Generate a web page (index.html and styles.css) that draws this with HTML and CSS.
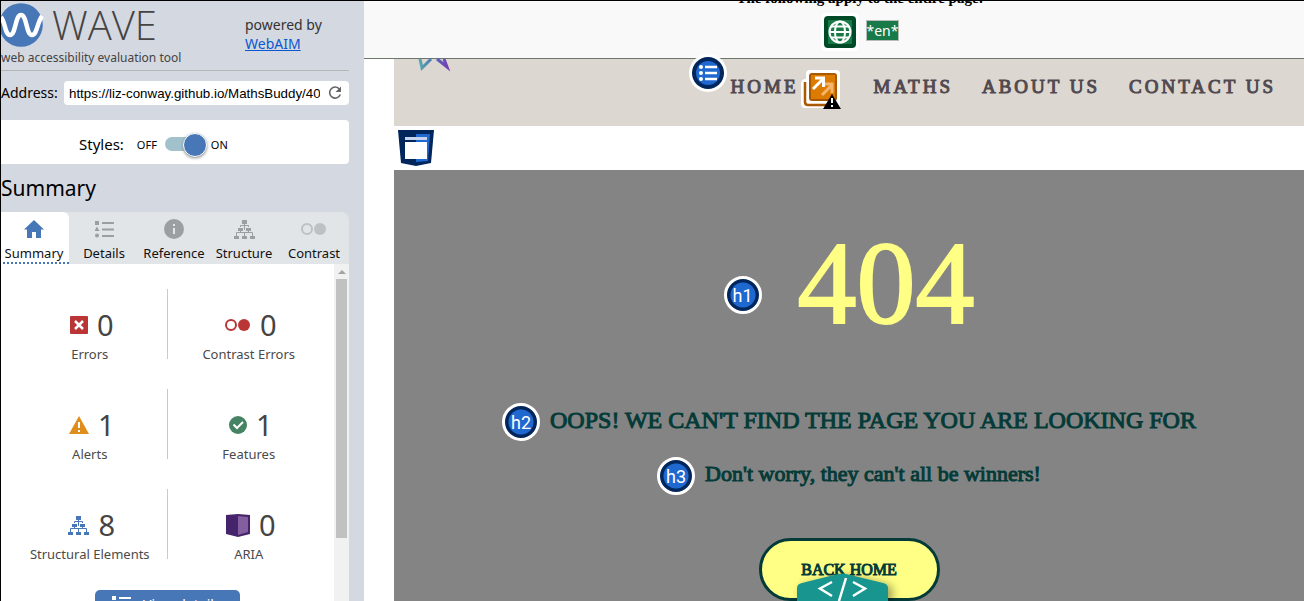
FILE: index.html
```html
<!DOCTYPE html>
<html lang="en">
<head>
<meta charset="utf-8">
<title>WAVE report</title>
<link rel="stylesheet" href="styles.css">
</head>
<body>
<svg class="defs" aria-hidden="true">
  <symbol id="tree" viewBox="0 0 21 19">
    <path fill="none" stroke="currentColor" d="M10.5 2v8M6.5 7V5.500h8V7M6.500 8v4M14.500 8v4M2.500 16v-3.500h16V16M10.500 12.500V17"/>
    <path fill="currentColor" d="M8 0h5v4H8zM4 8h5v3H4zM12 8h5v3h-5zM0 16h5v3H0zM8 16h5v3H8zM16 16h5v3h-5z"/>
  </symbol>
  <symbol id="rings" viewBox="0 0 26 12">
    <circle cx="6" cy="6" r="5" fill="none" stroke="currentColor" stroke-width="2"/>
    <circle cx="19" cy="6" r="6" fill="currentColor"/>
  </symbol>
  <symbol id="list" viewBox="0 0 19 17">
    <path fill="currentColor" d="M0 0h4v4H0zM2 5.500l2.500 4.500h-5zM7 1h12v2H7zM7 7.500h12v2H7zM7 14h12v2H7z"/>
    <circle cx="2" cy="14.500" r="2" fill="currentColor"/>
  </symbol>
</svg>
<aside class="sidebar">
  <header class="brand">
    <div class="logo">
      <div class="logo-line">
        <svg width="43" height="44" viewBox="0 0 43 44" aria-hidden="true"><circle cx="20" cy="22" r="21.800" fill="#4777b6"/><path d="M0 14c4 4 4 18 9 18 6 0 5-20 11-20s5 20 11 20c5 0 5-12 10-19" fill="none" stroke="#fff" stroke-width="4.500"/></svg>
        <span class="logo-name">WAVE</span>
      </div>
      <div class="tagline">web accessibility evaluation tool</div>
    </div>
    <div class="powered">powered by<br><a href="#">WebAIM</a></div>
  </header>
  <form class="address">
    <label for="url">Address:</label>
    <div class="field">
      <input id="url" type="text" value="https://liz-conway.github.io/MathsBuddy/404.html">
      <button type="button" aria-label="Reload"><svg width="14" height="14" viewBox="0 0 14 14"><path d="M11.500 3.200A5.500 5.500 0 1 0 12.300 8.500" fill="none" stroke="#666" stroke-width="1.600"/><path d="M13 .5V6H7.500z" fill="#666"/></svg></button>
    </div>
  </form>
  <label class="styles-toggle">
    <span class="styles-label">Styles:</span><span>OFF</span>
    <input type="checkbox" role="switch" checked>
    <span>ON</span>
  </label>
  <h2 class="section-title">Summary</h2>
  <nav class="tabs">
    <button class="tab active" type="button"><svg width="20" height="18" viewBox="0 0 20 18"><path fill="#4777b6" d="M10 0l10 9.500h-3V18h-5v-6H8v6H3V9.500H0z"/></svg><span>Summary</span></button>
    <button class="tab" type="button"><svg width="19" height="17"><use href="#list"/></svg><span>Details</span></button>
    <button class="tab" type="button"><svg width="20" height="20" viewBox="0 0 20 20"><circle cx="10" cy="10" r="10" fill="#9b9fa2"/><path fill="#e1e5e8" d="M9 5h2v2H9zM9 9h2v6H9z"/></svg><span>Reference</span></button>
    <button class="tab" type="button"><svg width="21" height="19"><use href="#tree"/></svg><span>Structure</span></button>
    <button class="tab faded" type="button"><svg width="26" height="12"><use href="#rings"/></svg><span>Contrast</span></button>
  </nav>
  <section class="panel">
    <div class="panel-body">
      <ul class="stats">
        <li><div class="count"><svg width="18" height="18" viewBox="0 0 18 18"><rect width="18" height="18" rx="1" fill="#b93536"/><path d="M5 5l8 8M13 5l-8 8" stroke="#fff" stroke-width="2.500"/></svg>0</div>Errors</li>
        <li><div class="count red"><svg width="26" height="12"><use href="#rings"/></svg>0</div>Contrast Errors</li>
        <li><div class="count"><svg width="20" height="18" viewBox="0 0 20 18"><path d="M10 0l10 18H0z" fill="#e08e1b"/><path d="M9 6h2v6H9zM9 14h2v2H9z" fill="#fff"/></svg>1</div>Alerts</li>
        <li><div class="count"><svg width="18" height="18" viewBox="0 0 18 18"><circle cx="9" cy="9" r="9" fill="#468364"/><path d="M4.500 8.500l3.500 3.500 6-6" fill="none" stroke="#fff" stroke-width="2"/></svg>1</div>Features</li>
        <li><div class="count blue"><svg width="21" height="19"><use href="#tree"/></svg>8</div>Structural Elements</li>
        <li><div class="count"><svg width="24" height="23" viewBox="0 0 24 23"><path d="M0 1l12-1 12 1v19l-12 3-12-3z" fill="#46246c"/><path d="M12 2l10 1v15l-10 3z" fill="#835f9f"/></svg>0</div>ARIA</li>
      </ul>
      <button class="details" type="button"><svg width="19" height="17"><use href="#list"/></svg>View details</button>
    </div>
    <div class="scroll" aria-hidden="true"><i class="arrow"></i><i class="thumb"></i></div>
  </section>
</aside>
<div class="content">
  <div class="pagebar">
    <p>The following apply to the entire page:</p>
    <div class="pageicons">
      <svg class="globe" width="38" height="38" viewBox="0 0 38 38"><rect width="38" height="38" rx="5" fill="#fff"/><rect x="3" y="3" width="32" height="32" rx="4" fill="#004b27"/><path fill="#187a48" d="M7 7h24v24H7z"/><g fill="none" stroke="#fff" stroke-width="2"><circle cx="19" cy="19" r="10.500"/><ellipse cx="19" cy="19" rx="5" ry="10.500"/><path d="M8.500 19h21M10 13.500h18M10 24.500h18"/></g></svg>
      <span class="lang">*en*</span>
    </div>
  </div>
  <div class="site">
    <header class="site-header">
      <svg class="star" width="34" height="12" viewBox="0 0 34 12"><defs><linearGradient id="sg" gradientUnits="userSpaceOnUse" x1="2" x2="32"><stop stop-color="#56aaa9"/><stop offset=".5" stop-color="#4c70bd"/><stop offset="1" stop-color="#7a3ab5"/></linearGradient></defs><path d="M3 0l2 9 9-9M20 0l10 8-3-8" fill="none" stroke="url(#sg)" stroke-width="3"/></svg>
      <nav class="links">
        <svg class="navmark" width="38" height="38" viewBox="0 0 38 38"><circle cx="19" cy="19" r="19" fill="#fff"/><circle cx="19" cy="19" r="16" fill="#00265c"/><circle cx="19" cy="19" r="12" fill="#1f68d0"/><path d="M16 13h12M16 19h12M16 25h12" stroke="#fff" stroke-width="2.500"/><g fill="#fff"><circle cx="12" cy="13" r="2"/><circle cx="12" cy="19" r="2"/><circle cx="12" cy="25" r="2"/></g></svg>
        <a href="#">HOME</a>
        <svg class="linkmark" width="40" height="40" viewBox="0 0 40 40"><path d="M5 9V4q0-4 4-4h26q4 0 4 4v34H4q-4 0-4-4V14q0-5 5-5z" fill="#fff"/><path d="M4 12v20q0 3 3 3h22" fill="none" stroke="#a95900" stroke-width="2.500"/><rect x="8" y="3" width="28" height="28" rx="3" fill="#a95900"/><path d="M10 5h24v24H10z" fill="#dd7a00"/><g fill="none" stroke-width="3"><path d="M21 25L30 16M22 14h9v9" stroke="#f2b66e"/><path d="M12 19L21 10M14 8h8.500v9" stroke="#fff"/></g><path d="M31 24l9 15H22z" fill="#000"/><path d="M30 28h2v5h-2zM30 35h2v2h-2z" fill="#fff"/></svg>
        <a href="#">MATHS</a><a href="#">ABOUT US</a><a href="#">CONTACT US</a>
      </nav>
    </header>
    <div class="strip"><svg width="36" height="36" viewBox="0 0 36 36"><path d="M0 0h36l-3 33-15 3-15-3z" fill="#00265c"/><path d="M18 4h14l-2 27-12 1z" fill="#1f68d0"/><path d="M7 12h22v17H7z" fill="#fff"/><path d="M7 7h22v3H7z" fill="#c5d3ee"/></svg></div>
    <main class="main">
      <div class="row hero"><span class="badge">h1</span><h1>404</h1></div>
      <div class="row oops"><span class="badge">h2</span><h2>OOPS! WE CAN'T FIND THE PAGE YOU ARE LOOKING FOR</h2></div>
      <div class="row worry"><span class="badge">h3</span><h3>Don't worry, they can't all be winners!</h3></div>
      <button class="home" type="button">BACK HOME</button>
    </main>
  </div>
  <button class="code" type="button" aria-label="Code panel"><svg width="91" height="28" viewBox="0 0 91 28"><path d="M0 28V15q0-4 5-5L41 1q4-1 8 0l37 9q5 1 5 5v13z" fill="#18958e"/><path d="M35 9l-12 6.500L35 23M56 9l12 6.500L56 23M49 5L42 28" fill="none" stroke="#fff" stroke-width="2.500"/></svg></button>
</div>
</body>
</html>
```

FILE: styles.css
```css
* { box-sizing: border-box; }
body {
  margin: 0;
  height: 100vh;
  overflow: hidden;
  display: grid;
  grid-template-columns: 363px 1fr;
  border-left: 1px solid #000;
  border-top: 1px solid #000;
  font-family: "Noto Sans", "Open Sans", sans-serif;
  color: #000;
}
h1, h2, h3, p, ul { margin: 0; padding: 0; }
button { border: 0; padding: 0; font: inherit; background: none; }
svg { display: block; flex: none; overflow: visible; }
.defs { position: absolute; width: 0; height: 0; }

.sidebar {
  background: #d4d8e0;
  padding-right: 15px;
  display: flex;
  flex-direction: column;
  min-height: 0;
  overflow: hidden;
}
.brand {
  display: flex;
  justify-content: space-between;
  height: 70px;
  border-bottom: 1px solid #b3b5b9;
}
.logo { color: #444; }
.logo-line { display: flex; align-items: center; gap: 8px; height: 47px; }
.logo-name { font-family: "Open Sans", "Noto Sans", sans-serif; font-weight: 300; font-size: 40px; line-height: 44px; }
.tagline { font-size: 12px; line-height: 19px; }
.powered { width: 104px; padding-top: 14px; font-size: 14px; line-height: 19px; color: #333; }
.powered a { color: #0b57d0; }

.address { display: flex; align-items: center; gap: 3px; margin-top: 10px; font-size: 14px; }
.address label { flex: none; width: 60px; line-height: 24px; }
.field { flex: 1; min-width: 0; display: flex; align-items: center; height: 24px; padding: 0 7px 0 5px; gap: 8px; background: #fff; border-radius: 4px; }
.field input { flex: 1; min-width: 0; border: 0; padding: 0; background: none; font-family: "Liberation Sans", Arial, sans-serif; color: #000; }

.styles-toggle { display: flex; align-items: center; gap: 8px; height: 44px; margin-top: 15px; padding: 4px 0 0 78px; background: #fff; border-radius: 0 4px 4px 0; font-size: 11px; }
.styles-label { font-size: 15px; margin-right: 5px; }
.styles-toggle input { appearance: none; position: relative; width: 38px; height: 14px; margin: 0; border-radius: 7px; background: #a1c2cc; }
.styles-toggle input::after { content: ""; position: absolute; right: -4px; top: -4px; width: 22px; height: 22px; border: 1px solid #fff; border-radius: 50%; background: #4777b6; box-shadow: 0 1px 3px #888; }

.section-title { margin-top: 9px; font-size: 21px; font-weight: 400; line-height: 30px; }

.tabs { display: grid; grid-template-columns: repeat(5, 1fr); margin: 9px 0 0 -2px; background: #e1e5e8; border-radius: 0 8px 0 0; }
.tab { display: grid; grid-template-rows: 34px 14px; place-items: center; font-size: 13px; height: 52px; line-height: 14px; color: #9b9fa2; border-bottom: 2px solid transparent; }
.tab span { color: #111; }
.tab.active { background: #fff; border-bottom: 2px dotted #4777b6; border-radius: 0 6px 0 0; }
.tab.faded { color: #bec1c3; }

.panel { display: flex; flex: 1; min-height: 0; background: #fff; overflow: hidden; }
.panel-body { flex: 1; padding: 25px 8px 0 8px; }
.stats { list-style: none; display: grid; grid-template-columns: 1fr 1fr; row-gap: 30px; }
.stats li { height: 70px; padding: 16px 0 0 4px; text-align: center; font-size: 13px; line-height: 18px; white-space: nowrap; color: #4a4a4a; }
.stats li:nth-child(odd) { border-right: 1px solid #c9c9c9; }
.count { display: flex; align-items: center; justify-content: center; gap: 9px; height: 40px; padding-left: 4px; font-size: 29px; line-height: 40px; color: #444; }
.count.red svg { color: #b93536; }
.count.blue svg { color: #4777b6; }
.details { display: flex; align-items: center; gap: 12px; width: 145px; margin: 31px auto 0; height: 28px; padding: 0 17px; border-radius: 5px; background: #4777b6; color: #fff; font-size: 14px; white-space: nowrap; }
.scroll { width: 15px; flex: none; background: #f1f1f1; display: flex; flex-direction: column; align-items: center; }
.arrow { margin: 6px 0 5px; border: 4px solid transparent; border-top: 0; border-bottom-color: #a3a3a3; }
.thumb { width: 11px; height: 77%; background: #c1c1c1; }

.content { position: relative; overflow: hidden; min-width: 0; font-family: "Liberation Serif", "Times New Roman", serif; }
.pagebar { height: 58px; overflow: hidden; background: #f9f9f9; border-bottom: 1px solid #6b786b; display: flex; flex-direction: column; justify-content: flex-end; align-items: center; padding: 0 0 7px 52px; }
.pagebar p { font-size: 15px; line-height: 18px; margin-bottom: 6px; font-weight: 700; white-space: nowrap; }
.pageicons { display: flex; align-items: center; gap: 7px; }
.lang { height: 21px; margin-bottom: 3px; border: 1px solid #b8bcb8; background: #187a48; color: #fff; font: 14px/19px "Noto Sans", sans-serif; }
.site { margin-left: 30px; }
.site-header { display: flex; justify-content: space-between; height: 67px; padding: 0 28px 0 23px; background: #dcd7d1; }
.links { display: flex; align-items: flex-start; }
.links a { margin: 16px 0 0 29px; font-size: 19px; line-height: 24px; letter-spacing: 3px; color: #514950; -webkit-text-stroke: 1px; text-decoration: none; white-space: nowrap; }
.links .navmark { margin: -5px 4px 0 0; }
.links .navmark + a { margin-left: 0; }
.linkmark { margin: 11px 4px 0 2px; }
.strip { height: 44px; padding: 4px; background: #fff; }
.main { display: flex; flex-direction: column; align-items: center; height: 480px; padding-top: 56px; background: #848484; color: #043b38; }
.row { display: flex; align-items: center; height: 38px; gap: 10px; white-space: nowrap; }
.badge { width: 38px; height: 38px; border: 3px solid #fff; border-radius: 50%; background: radial-gradient(circle, #1f68d0 12px, #00265c 13px); color: #fff; font: 18px/34px Roboto, sans-serif; text-align: center; }
.row .badge { margin-top: 4px; }
.row.hero { height: 116px; gap: 36px; }
.row.hero .badge { margin-top: 22px; }
h1 { font-size: 118px; line-height: 116px; font-weight: 400; color: #ffff85; -webkit-text-stroke: 2px; }
.row h2, .row h3 { font-weight: 400; -webkit-text-stroke: 1px; }
.oops { margin-top: 59px; }
.oops h2 { font-size: 24px; }
.worry { margin-top: 16px; }
.worry h3 { font-size: 22px; }
.home { width: 181px; height: 63px; margin-top: 45px; border: 3px solid #043b38; border-radius: 32px; background: #ffff85; color: #043b38; font-size: 16px; -webkit-text-stroke: 1px; }
.code { position: absolute; bottom: 0; left: calc(50% - 37px); filter: drop-shadow(4px 2px 5px #0006); }
```
